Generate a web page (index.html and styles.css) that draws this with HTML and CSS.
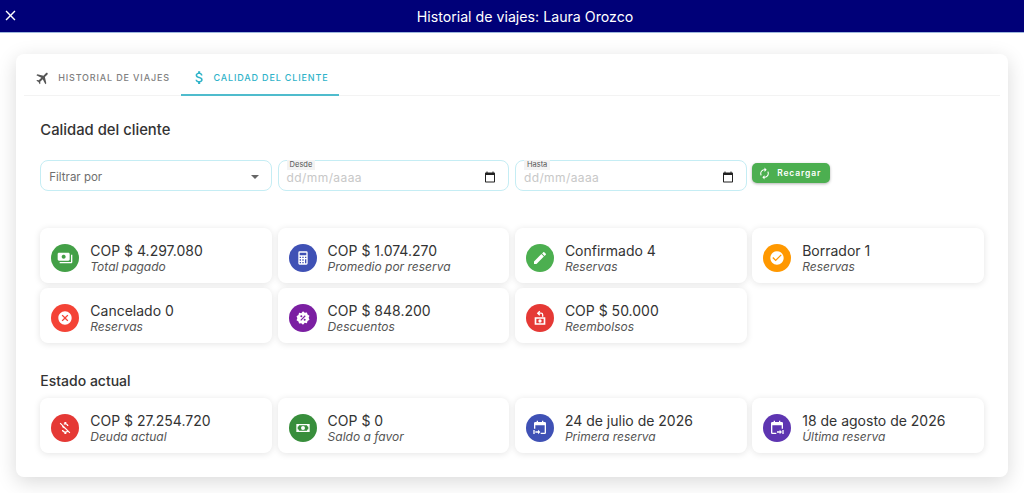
FILE: index.html
```html
<!DOCTYPE html>
<html lang="es">
<head>
    <meta charset="UTF-8">
    <meta name="viewport" content="width=device-width, initial-scale=1.0">
    <title>Historial de viajes</title>
    <link rel="stylesheet" href="styles.css">
</head>
<body>
    <header class="topbar">
        <button class="close-btn" aria-label="Cerrar">
            <svg viewBox="0 0 24 24"><path d="M19 6.41L17.59 5 12 10.59 6.41 5 5 6.41 10.59 12 5 17.59 6.41 19 12 13.41 17.59 19 19 17.59 13.41 12z"/></svg>
        </button>
        <h1>Historial de viajes: Laura Orozco</h1>
    </header>
    <main class="content">
        <div class="panel">
            <nav class="tabs">
                <div class="tab">
                    <svg class="plane" viewBox="0 0 24 24"><path d="M21 16v-2l-8-5V3.5c0-.83-.67-1.5-1.5-1.5S10 2.67 10 3.5V9l-8 5v2l8-2.5V19l-2 1.5V22l3.500-1 3.500 1v-1.500L13 19v-5.500l8 2.500z"/></svg>
                    Historial de viajes
                </div>
                <div class="tab active">
                    <svg viewBox="0 0 24 24"><path d="M11.8 10.9c-2.27-.59-3-1.2-3-2.15 0-1.09 1.01-1.85 2.7-1.85 1.78 0 2.44.85 2.5 2.1h2.21c-.07-1.72-1.12-3.3-3.21-3.81V3h-3v2.16c-1.94.42-3.5 1.68-3.5 3.61 0 2.31 1.91 3.46 4.7 4.13 2.5.6 3 1.48 3 2.41 0 .69-.49 1.79-2.7 1.79-2.06 0-2.87-.92-2.98-2.1h-2.2c.12 2.19 1.76 3.42 3.68 3.83V21h3v-2.15c1.95-.37 3.5-1.5 3.5-3.55 0-2.84-2.43-3.81-4.7-4.4z"/></svg>
                    Calidad del cliente
                </div>
            </nav>
            <section class="body">
                <h2>Calidad del cliente</h2>
                <div class="filters">
                    <div class="field">
                        <span class="select-text">Filtrar por</span>
                        <span class="caret"></span>
                    </div>
                    <div class="field">
                        <span class="float-label">Desde</span>
                        <span class="date-text">dd/mm/aaaa</span>
                        <svg class="cal" viewBox="0 0 24 24"><path d="M20 3h-1V1h-2v2H7V1H5v2H4c-1.1 0-2 .9-2 2v16c0 1.1.9 2 2 2h16c1.1 0 2-.9 2-2V5c0-1.1-.9-2-2-2zm0 18H4V8h16v13z"/></svg>
                    </div>
                    <div class="field">
                        <span class="float-label">Hasta</span>
                        <span class="date-text">dd/mm/aaaa</span>
                        <svg class="cal" viewBox="0 0 24 24"><path d="M20 3h-1V1h-2v2H7V1H5v2H4c-1.1 0-2 .9-2 2v16c0 1.1.9 2 2 2h16c1.1 0 2-.9 2-2V5c0-1.1-.9-2-2-2zm0 18H4V8h16v13z"/></svg>
                    </div>
                    <div class="btn-cell">
                        <button class="reload">
                            <svg viewBox="0 0 24 24"><path d="M12 6v3l4-4-4-4v3c-4.42 0-8 3.58-8 8 0 1.57.46 3.03 1.24 4.26L6.7 14.8c-.45-.83-.7-1.79-.7-2.8 0-3.31 2.69-6 6-6zm6.76 1.74L17.3 9.2c.44.84.7 1.79.7 2.8 0 3.31-2.69 6-6 6v-3l-4 4 4 4v-3c4.42 0 8-3.58 8-8 0-1.57-.46-3.03-1.24-4.26z"/></svg>
                            Recargar
                        </button>
                    </div>
                </div>

                <div class="stats">
                    <div class="stat">
                        <span class="ico green"><svg viewBox="0 0 24 24"><path d="M19 14V6c0-1.1-.9-2-2-2H3c-1.1 0-2 .9-2 2v8c0 1.1.9 2 2 2h14c1.1 0 2-.9 2-2zm-9-1c-1.66 0-3-1.34-3-3s1.34-3 3-3 3 1.34 3 3-1.34 3-3 3zm13-6v11c0 1.1-.9 2-2 2H4v-2h17V7h2z"/></svg></span>
                        <div><p class="val">COP $ 4.297.080</p><p class="lbl">Total pagado</p></div>
                    </div>
                    <div class="stat">
                        <span class="ico indigo"><svg viewBox="0 0 24 24"><path d="M7,2H17A2,2 0 0,1 19,4V20A2,2 0 0,1 17,22H7A2,2 0 0,1 5,20V4A2,2 0 0,1 7,2M7,4V8H17V4H7M7,10V12H9V10H7M11,10V12H13V10H11M15,10V12H17V10H15M7,14V16H9V14H7M11,14V16H13V14H11M15,14V20H17V14H15M7,18V20H9V18H7M11,18V20H13V18H11Z"/></svg></span>
                        <div><p class="val">COP $ 1.074.270</p><p class="lbl">Promedio por reserva</p></div>
                    </div>
                    <div class="stat">
                        <span class="ico light-green"><svg viewBox="0 0 24 24"><path d="M20.71,7.04C21.1,6.65 21.1,6 20.71,5.63L18.37,3.29C18,2.9 17.35,2.9 16.96,3.29L15.12,5.12L18.87,8.87M3,17.25V21H6.75L17.81,9.93L14.06,6.18L3,17.25Z"/></svg></span>
                        <div><p class="val">Confirmado 4</p><p class="lbl">Reservas</p></div>
                    </div>
                    <div class="stat">
                        <span class="ico orange"><svg viewBox="0 0 24 24"><path d="M12 2C6.5 2 2 6.5 2 12S6.5 22 12 22 22 17.5 22 12 17.5 2 12 2M10 17L5 12L6.41 10.59L10 14.17L17.59 6.58L19 8L10 17Z"/></svg></span>
                        <div><p class="val">Borrador 1</p><p class="lbl">Reservas</p></div>
                    </div>
                    <div class="stat">
                        <span class="ico red"><svg viewBox="0 0 24 24"><path d="M12,2C17.53,2 22,6.47 22,12C22,17.53 17.53,22 12,22C6.47,22 2,17.53 2,12C2,6.47 6.47,2 12,2M15.59,7L12,10.59L8.41,7L7,8.41L10.59,12L7,15.59L8.41,17L12,13.41L15.59,17L17,15.59L13.41,12L17,8.41L15.59,7Z"/></svg></span>
                        <div><p class="val">Cancelado 0</p><p class="lbl">Reservas</p></div>
                    </div>
                    <div class="stat">
                        <span class="ico purple"><svg viewBox="0 0 24 24"><path fill-rule="evenodd" d="M12 2l2.6 2.1 3.3-.4.9 3.2 2.9 1.7-1.2 3.1 1.2 3.1-2.9 1.7-.9 3.2-3.3-.4L12 22l-2.6-2.1-3.3.4-.9-3.2-2.9-1.7 1.2-3.1-1.2-3.1 2.9-1.7.9-3.2 3.3.4zM8 15l1.2 1.2 6.8-7-1.2-1.2zM9.5 8A1.5 1.5 0 1 0 9.5 11 1.5 1.5 0 1 0 9.5 8zM14.5 13A1.5 1.5 0 1 0 14.5 16 1.5 1.5 0 1 0 14.5 13z"/></svg></span>
                        <div><p class="val">COP $ 848.200</p><p class="lbl">Descuentos</p></div>
                    </div>
                    <div class="stat">
                        <span class="ico crimson"><svg viewBox="0 0 24 24"><path fill-rule="evenodd" d="M4 11h16v11H4zM6.5 13v7h11v-7zM12 14a2.5 2.5 0 1 0 0 5 2.5 2.5 0 1 0 0-5zM11 1l1.4 1.4L11 3.8h2.5A3.5 3.5 0 0 1 17 7.300V10h-2V7.300A1.500 1.500 0 0 0 13.500 5.800H11l1.400 1.400L11 8.600 7.200 4.800z"/></svg></span>
                        <div><p class="val">COP $ 50.000</p><p class="lbl">Reembolsos</p></div>
                    </div>
                </div>

                <h3>Estado actual</h3>
                <div class="stats">
                    <div class="stat">
                        <span class="ico crimson"><svg viewBox="0 0 24 24"><path d="M12.5 6.9c1.78 0 2.44.85 2.5 2.1h2.21c-.07-1.72-1.12-3.3-3.21-3.81V3h-3v2.16c-.53.12-1.03.3-1.48.54l1.47 1.47c.41-.17.91-.27 1.51-.27zM5.33 4.06L4.06 5.33 7.5 8.77c0 2.08 1.56 3.21 3.91 3.91l3.51 3.51c-.34.48-1.05.91-2.42.91-2.06 0-2.87-.92-2.98-2.1h-2.2c.12 2.19 1.76 3.42 3.68 3.83V21h3v-2.15c.96-.18 1.82-.55 2.45-1.12l2.22 2.22 1.27-1.27L5.33 4.06z"/></svg></span>
                        <div><p class="val">COP $ 27.254.720</p><p class="lbl">Deuda actual</p></div>
                    </div>
                    <div class="stat">
                        <span class="ico dark-green"><svg viewBox="0 0 24 24"><path fill-rule="evenodd" d="M2 6h20v12H2zM6 8a2 2 0 0 1-2 2v4a2 2 0 0 1 2 2h12a2 2 0 0 1 2-2v-4a2 2 0 0 1-2-2zM12 9a3 3 0 1 0 0 6 3 3 0 1 0 0-6z"/></svg></span>
                        <div><p class="val">COP $ 0</p><p class="lbl">Saldo a favor</p></div>
                    </div>
                    <div class="stat">
                        <span class="ico indigo"><svg viewBox="0 0 24 24"><path d="M7 1h2v2h6V1h2v2h2a2 2 0 0 1 2 2v14a2 2 0 0 1-2 2h-6v-2h6V8H5v5H3V5a2 2 0 0 1 2-2h2zM2 15h2v6H2zM5 17h4v-2.500L12.500 18 9 21.500V19H5z"/></svg></span>
                        <div><p class="val">24 de julio de 2026</p><p class="lbl">Primera reserva</p></div>
                    </div>
                    <div class="stat">
                        <span class="ico violet"><svg viewBox="0 0 24 24"><path d="M7 1h2v2h6V1h2v2h2a2 2 0 0 1 2 2v8h-2V8H5v11h6v2H5a2 2 0 0 1-2-2V5a2 2 0 0 1 2-2h2zM20 15h2v6h-2zM12 17h4v-2.500L19.500 18 16 21.500V19h-4z"/></svg></span>
                        <div><p class="val">18 de agosto de 2026</p><p class="lbl">Última reserva</p></div>
                    </div>
                </div>
            </section>
        </div>
    </main>
</body>
</html>
```

FILE: styles.css
```css
*{
    margin:0;
    padding:0;
    box-sizing: border-box;
}
body{
    width:1024px;
    height:493px;
    overflow:hidden;
    background:#fff;
    font-family:'Inter', 'Noto Sans', sans-serif;
    color:#333;
}
.topbar{
    height:33px;
    background:#000078;
    border-bottom:1px solid #9db7dc;
    display:flex;
    align-items:center;
    justify-content:center;
    padding-left:26px;
    position:relative;
}
.topbar h1{
    font-size:14.2px;
    font-weight:400;
    color:#fff;
}
.close-btn{
    position:absolute;
    left:2px;
    top:7px;
    width:17px;
    height:17px;
    border:none;
    background:none;
}
.close-btn svg{
    display:block;
    width:17px;
    height:17px;
    fill:#fff;
}
.content{
    padding:21px 16px 0;
}
.panel{
    height:423px;
    background:#fff;
    border-radius:8px;
    box-shadow:0 5px 20px rgba(0,0,0,0.15);
    padding:0 8px;
}
.tabs{
    display:flex;
    height:42px;
    border-bottom:1px solid #f3f3f3;
}
.tab{
    display:flex;
    align-items:center;
    justify-content:center;
    gap:7px;
    height:41px;
    width:157px;
    padding-top:6px;
    font-size:9px;
    font-weight:500;
    letter-spacing:.85px;
    text-transform:uppercase;
    color:#808080;
}
.tab svg{
    width:14px;
    height:14px;
    fill:#555;
}
.tab .plane{
    width:16px;
    height:16px;
    transform:rotate(45deg);
}
.tab.active{
    width:158px;
    gap:5px;
    color:#2fb3c9;
    border-bottom:2px solid #4fbccd;
    height:42px;
    padding-top:7px;
}
.tab.active svg{
    width:17px;
    height:17px;
    fill:#2fb3c9;
}
.body{
    padding:0 16px 0 16.3px;
}
h2{
    font-size:14.8px;
    font-weight:500;
    line-height:20px;
    margin-top:24px;
}
.filters{
    display:grid;
    grid-template-columns:repeat(4, 1fr);
    column-gap:5.5px;
    margin-top:20px;
    height:31px;
}
.field{
    position:relative;
    display:flex;
    align-items:center;
    justify-content:space-between;
    height:31px;
    padding:3px 8px 0;
    border:1px solid #c5edf4;
    border-radius:8px;
    background:#fff;
}
.select-text{
    font-size:11.5px;
    color:#6f6f6f;
}
.caret{
    width:0;
    height:0;
    margin-right:4px;
    border-left:4px solid transparent;
    border-right:4px solid transparent;
    border-top:4px solid #666;
}
.float-label{
    position:absolute;
    left:8px;
    top:-1px;
    padding:0 3px;
    font-size:7.5px;
    line-height:10px;
    background:#f3f3f3;
    color:#555;
}
.date-text{
    font-size:12px;
    letter-spacing:.4px;
    color:#c8c8c8;
}
.cal{
    width:12px;
    height:12px;
    fill:#222;
    margin-right:4px;
}
.btn-cell{
    padding-top:3px;
}
.reload{
    display:flex;
    align-items:center;
    gap:6px;
    width:78px;
    height:20px;
    padding-left:6px;
    border:none;
    border-radius:5px;
    background:#4caf50;
    color:#fff;
    font-family:inherit;
    font-size:8.5px;
    font-weight:600;
    letter-spacing:.85px;
    box-shadow:0 1px 3px rgba(0,0,0,0.3);
}
.reload svg{
    width:13px;
    height:13px;
    fill:#fff;
}
.stats{
    display:grid;
    grid-template-columns:repeat(4, 1fr);
    column-gap:5.5px;
    row-gap:5px;
    margin-top:37px;
}
h3 + .stats{
    margin-top:7px;
}
.stat{
    display:flex;
    align-items:center;
    gap:11px;
    height:55px;
    padding:4px 11px 0;
    border-radius:8px;
    background:#fff;
    box-shadow:0 1px 7px rgba(0,0,0,0.11);
}
.ico{
    flex:none;
    display:flex;
    align-items:center;
    justify-content:center;
    width:28px;
    height:28px;
    border-radius:50%;
}
.ico svg{
    width:16px;
    height:16px;
    fill:#fff;
}
.green{background:#43a047;}
.light-green{background:#4caf50;}
.dark-green{background:#388e3c;}
.indigo{background:#3f51b5;}
.orange{background:#ff9800;}
.red{background:#f44336;}
.crimson{background:#e53935;}
.purple{background:#7b1fa2;}
.violet{background:#5e35b1;}
.val{
    font-size:14px;
    line-height:18px;
    color:#333;
}
.lbl{
    font-size:12px;
    line-height:14px;
    font-style:italic;
    color:#555;
}
h3{
    font-size:14px;
    font-weight:500;
    line-height:20px;
    margin-top:28px;
}
```
